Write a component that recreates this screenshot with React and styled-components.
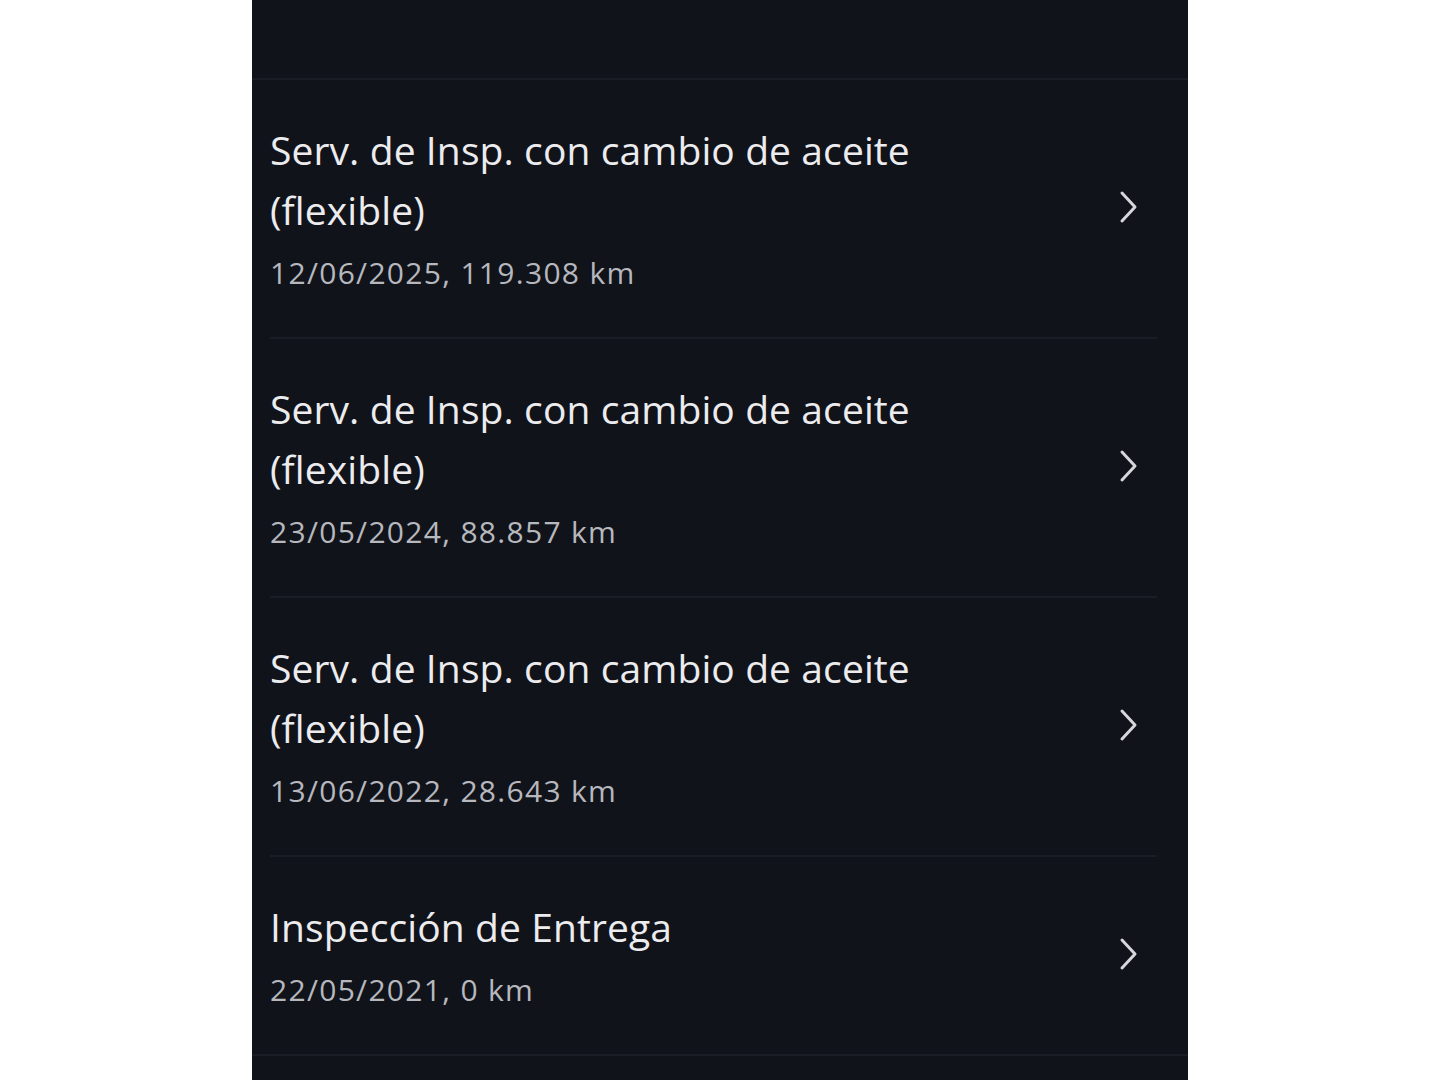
import React from "react";
import styled, { createGlobalStyle } from "styled-components";

const GlobalStyle = createGlobalStyle`
  html, body {
    margin: 0;
    padding: 0;
    background: #ffffff;
  }
  body {
    font-family: "Open Sans", "Noto Sans", sans-serif;
  }
`;

const Panel = styled.div`
  width: 936px;
  min-height: 1080px;
  margin: 0 auto;
  background: #11131b;
  display: flex;
  flex-direction: column;
`;

const TopBar = styled.div`
  height: 78px;
  border-bottom: 2px solid #1a1c25;
`;

const Row = styled.div`
  position: relative;
  display: flex;
  align-items: center;
  justify-content: space-between;
  padding: 40px 48px 46px 18px;
  &::after {
    content: "";
    position: absolute;
    left: ${(p) => (p.last ? "0" : "18px")};
    right: ${(p) => (p.last ? "0" : "31px")};
    bottom: 0;
    height: 2px;
    background: #1b1d26;
  }
`;

const Texts = styled.div`
  display: flex;
  flex-direction: column;
`;

const Title = styled.div`
  font-size: 39px;
  line-height: 60px;
  letter-spacing: 0.1px;
  color: #ececee;
  max-width: 700px;
`;

const Meta = styled.div`
  margin-top: 13px;
  font-size: 30px;
  line-height: 40px;
  letter-spacing: 1.3px;
  color: #b6b8be;
`;

const Chevron = () => (
  <svg width="22" height="34" viewBox="0 0 22 34" fill="none">
    <path
      d="M4 3 L17 17 L4 31"
      stroke="#d6d7db"
      strokeWidth="3"
      strokeLinecap="round"
      strokeLinejoin="round"
    />
  </svg>
);

const services = [
  {
    title: "Serv. de Insp. con cambio de aceite (flexible)",
    meta: "12/06/2025, 119.308 km",
  },
  {
    title: "Serv. de Insp. con cambio de aceite (flexible)",
    meta: "23/05/2024, 88.857 km",
  },
  {
    title: "Serv. de Insp. con cambio de aceite (flexible)",
    meta: "13/06/2022, 28.643 km",
  },
  { title: "Inspección de Entrega", meta: "22/05/2021, 0 km" },
];

const App = () => {
  return (
    <>
      <GlobalStyle />
      <Panel>
        <TopBar />
        {services.map((s, i) => (
          <Row key={i} last={i === services.length - 1}>
            <Texts>
              <Title>{s.title}</Title>
              <Meta>{s.meta}</Meta>
            </Texts>
            <Chevron />
          </Row>
        ))}
      </Panel>
    </>
  );
};

export default App;
